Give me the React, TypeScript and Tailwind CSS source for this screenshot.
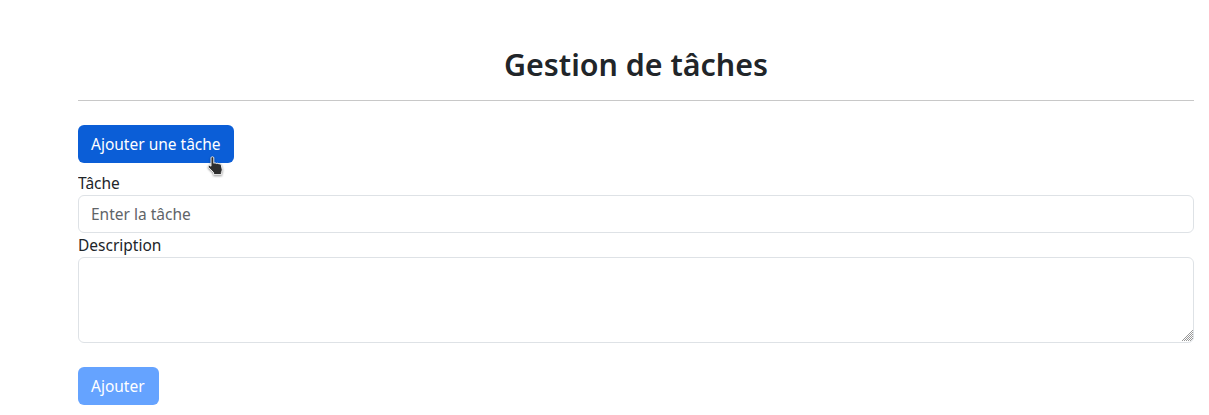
const font = { fontFamily: '"Noto Sans", sans-serif' };

function HandCursor() {
  return (
    <svg
      width="18"
      height="20"
      viewBox="0 0 18 20"
      className="absolute left-[129px] top-[31px]"
      style={{ filter: "drop-shadow(0 1px 1px rgba(0,0,0,0.45))" }}
    >
      <path
        d="M4 1.8c0-1.4 2.8-1.4 2.8 0v5.4c.9-.5 2-.3 2.5.3.8-.5 2-.3 2.5.5.9-.4 2.2 0 2.5 1.1l.9 4.3c.2 1.1-.3 2.2-.8 3v2.2H6.6v-2L1.5 11.4c-.8-1.1.5-2.6 1.6-1.8L4 10.2z"
        fill="#2e2e2e"
        stroke="#fff"
        strokeWidth="0.9"
        strokeLinejoin="round"
      />
    </svg>
  );
}

function ResizeGrip() {
  return (
    <svg width="11" height="11" viewBox="0 0 11 11" className="pointer-events-none absolute bottom-[2px] right-[1px]">
      <path d="M0 11L11 0M2 11L11 2M4 11L11 4M6 11L11 6M8 11L11 8" stroke="#8c8c8c" strokeWidth="0.9" />
    </svg>
  );
}

export default function App() {
  return (
    <div className="ml-[78px] mr-[15px] h-[415px] overflow-hidden bg-white text-[#212529]" style={font}>
      <h2 className="pt-[44px] text-center text-[30.4px] font-semibold leading-[42px]">Gestion de tâches</h2>
      <hr className="mt-[14px] border-t border-[#c8c8c8]" />
      <div className="relative mt-[24px] w-fit">
        <button className="h-[38px] rounded-md bg-[#0b5ed7] px-[13px] text-[15.5px] leading-[36px] text-white">
          Ajouter une tâche
        </button>
        <HandCursor />
      </div>
      <form className="mt-[8px]">
        <label className="block h-[24px] text-[15.5px] leading-[25px]">Tâche</label>
        <input
          placeholder="Enter la tâche"
          className="block h-[38px] w-full rounded-md border border-[#dee2e6] px-[12px] pb-[1px] text-[15.5px] placeholder:text-[#5f6468]"
        />
        <label className="block h-[24px] text-[15.5px] leading-[25px]">Description</label>
        <div className="relative">
          <textarea className="block h-[86px] w-full resize-none rounded-md border border-[#dee2e6] px-[12px] py-[6px]" />
          <ResizeGrip />
        </div>
        <button
          type="button"
          className="mt-[24px] h-[38px] rounded-md bg-[#65a3ff] pl-[13px] pr-[14px] text-[15.5px] leading-[36px] text-white"
        >
          Ajouter
        </button>
      </form>
    </div>
  );
}
